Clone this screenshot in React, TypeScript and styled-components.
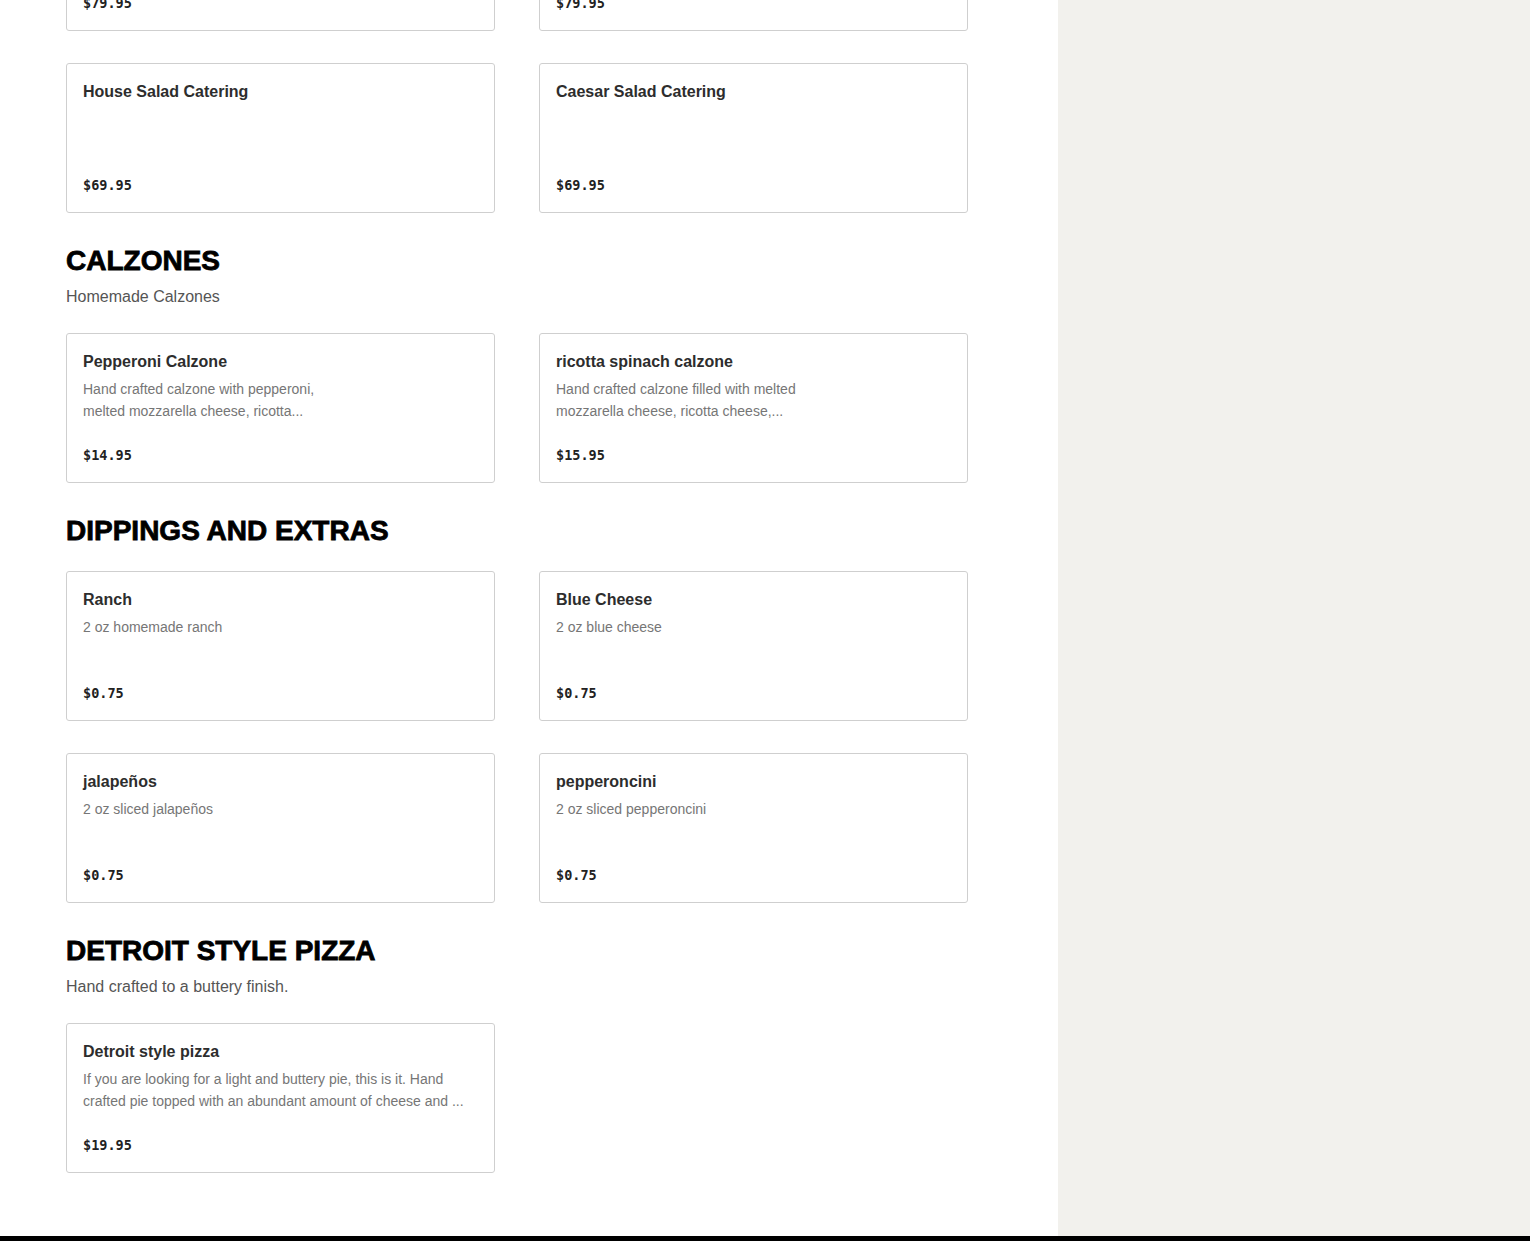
import styled, { createGlobalStyle } from "styled-components";

const GlobalStyle = createGlobalStyle`
  html, body {
    margin: 0;
    padding: 0;
    background: #ffffff;
    overflow: hidden;
  }
  body {
    font-family: "Liberation Sans", Arial, sans-serif;
    color: #2b2b2b;
  }
`;

const Page = styled.div`
  display: flex;
  flex-direction: column;
`;

const Layout = styled.div`
  display: flex;
  align-items: stretch;
`;

const Main = styled.main`
  width: 1058px;
  box-sizing: border-box;
  padding: 0 90px 63px 66px;
  background: #ffffff;
`;

const Sidebar = styled.aside`
  flex: 1;
  background: #f2f1ed;
`;

const Footer = styled.footer`
  height: 240px;
  background: #000000;
`;

/* the page is scrolled: the first row of cards sits mostly above the fold */
const Section = styled.section`
  padding-top: 30px;

  &:first-child {
    padding-top: 0;
    margin-top: -143px;
  }
`;

const Heading = styled.h2`
  margin: 0;
  font-family: "Liberation Sans", Arial, sans-serif;
  font-size: 28px;
  line-height: 36px;
  font-weight: 700;
  letter-spacing: 0;
  color: #000000;
  -webkit-text-stroke: 0.8px #000000;
  text-transform: uppercase;
`;

const Subtitle = styled.p`
  margin: 6px 0 0;
  font-size: 16px;
  line-height: 24px;
  color: #555555;
`;

const Grid = styled.div<{ $tight?: boolean }>`
  display: grid;
  grid-template-columns: 429px 429px;
  column-gap: 44px;
  row-gap: 32px;
  margin-top: ${(p) => (p.$tight ? "22px" : "24px")};
`;

const Card = styled.div`
  box-sizing: border-box;
  height: 150px;
  display: flex;
  flex-direction: column;
  padding: 16px 16px 17px;
  border: 1px solid #cfcfcf;
  border-radius: 3px;
  background: #ffffff;
`;

const Title = styled.h3`
  margin: 0;
  font-size: 16px;
  line-height: 24px;
  font-weight: 700;
  color: #2d2d2d;
`;

const Description = styled.p<{ $narrow?: boolean }>`
  margin: 4px 0 0;
  max-width: ${(p) => (p.$narrow ? "255px" : "none")};
  font-size: 14px;
  line-height: 22px;
  color: #767676;
`;

const Price = styled.span`
  margin-top: auto;
  font-family: "DejaVu Sans Mono", "Liberation Mono", monospace;
  font-size: 13.5px;
  line-height: 20px;
  font-weight: 700;
  color: #222222;
`;

type Item = {
  name: string;
  description?: string;
  narrow?: boolean;
  price: string;
};

type Category = {
  title?: string;
  subtitle?: string;
  items: Item[];
};

const categories: Category[] = [
  {
    items: [
      { name: "Greek Salad Catering", price: "$79.95" },
      { name: "Antipasto Salad Catering", price: "$79.95" },
      { name: "House Salad Catering", price: "$69.95" },
      { name: "Caesar Salad Catering", price: "$69.95" },
    ],
  },
  {
    title: "Calzones",
    subtitle: "Homemade Calzones",
    items: [
      {
        name: "Pepperoni Calzone",
        description:
          "Hand crafted calzone with pepperoni, melted mozzarella cheese, ricotta...",
        narrow: true,
        price: "$14.95",
      },
      {
        name: "ricotta spinach calzone",
        description:
          "Hand crafted calzone filled with melted mozzarella cheese, ricotta cheese,...",
        narrow: true,
        price: "$15.95",
      },
    ],
  },
  {
    title: "Dippings and Extras",
    items: [
      { name: "Ranch", description: "2 oz homemade ranch", price: "$0.75" },
      { name: "Blue Cheese", description: "2 oz blue cheese", price: "$0.75" },
      { name: "jalapeños", description: "2 oz sliced jalapeños", price: "$0.75" },
      {
        name: "pepperoncini",
        description: "2 oz sliced pepperoncini",
        price: "$0.75",
      },
    ],
  },
  {
    title: "Detroit Style Pizza",
    subtitle: "Hand crafted to a buttery finish.",
    items: [
      {
        name: "Detroit style pizza",
        description:
          "If you are looking for a light and buttery pie, this is it. Hand crafted pie topped with an abundant amount of cheese and ...",
        price: "$19.95",
      },
    ],
  },
];

const MenuCard = ({ item }: { item: Item }) => (
  <Card>
    <Title>{item.name}</Title>
    {item.description && (
      <Description $narrow={item.narrow}>{item.description}</Description>
    )}
    <Price>{item.price}</Price>
  </Card>
);

export default function App() {
  return (
    <Page>
      <GlobalStyle />
      <Layout>
        <Main>
          {categories.map((cat, i) => (
            <Section key={i}>
              {cat.title && <Heading>{cat.title}</Heading>}
              {cat.subtitle && <Subtitle>{cat.subtitle}</Subtitle>}
              <Grid $tight={!cat.subtitle && !!cat.title}>
                {cat.items.map((item) => (
                  <MenuCard key={item.name} item={item} />
                ))}
              </Grid>
            </Section>
          ))}
        </Main>
        <Sidebar />
      </Layout>
      <Footer />
    </Page>
  );
}
